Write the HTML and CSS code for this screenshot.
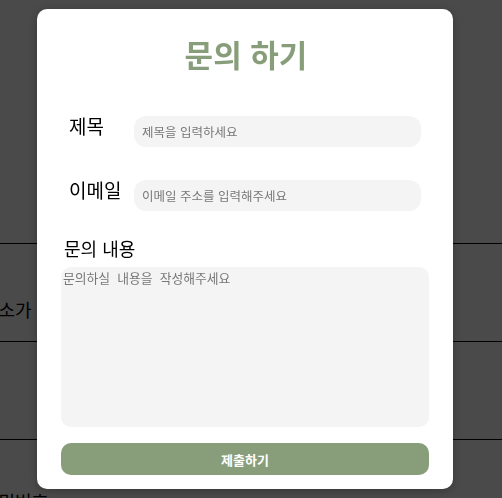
FILE: index.html
```html
<!DOCTYPE html>
<html lang="ko">
<head>
    <meta charset="UTF-8">
    <meta name="viewport" content="width=device-width, initial-scale=1.0">
    <title>문의 하기</title>
    <link rel="stylesheet" href="styles.css">
</head>
<body>

    <div class="list">
        <div class="row first"></div>
        <div class="row middle"><span class="cut">이소가</span></div>
        <div class="row"></div>
        <div class="row last"><span class="cut">비밀번호</span></div>
    </div>

    <div class="overlay">
        <div class="modal">
            <h1>문의 하기</h1>
            <form class="form">
                <div class="field">
                    <label for="title">제목</label>
                    <input id="title" type="text" placeholder="제목을 입력하세요">
                </div>
                <div class="field">
                    <label for="email">이메일</label>
                    <input id="email" type="email" placeholder="이메일 주소를 입력해주세요">
                </div>
                <label class="content-label" for="content">문의 내용</label>
                <textarea id="content" placeholder="문의하실  내용을  작성해주세요"></textarea>
                <button type="button" class="submit">제출하기</button>
            </form>
        </div>
    </div>

</body>
</html>
```
FILE: styles.css
```css
body {
    margin: 0;
    padding: 0;
    background-color: #4a4a4a;
    font-family: "Noto Sans CJK KR", "Noto Sans", sans-serif;
    overflow: hidden;
    height: 498px;
}
.list {
    display: flex;
    flex-direction: column;
    height: 498px;
    overflow: hidden;
}
.row {
    flex-shrink: 0;
    box-sizing: border-box;
    height: 98px;
    border-bottom: 1px solid #000;
    display: flex;
    align-items: center;
    font-size: 18px;
    color: #000;
    overflow: hidden;
}
.row.first {
    height: 244px;
}
.row.middle {
    padding-top: 32px;
}
.row.last {
    align-items: flex-start;
    padding-top: 48px;
    height: 58px;
    border-bottom: none;
}
.cut {
    margin-left: -18px;
    white-space: nowrap;
}
.overlay {
    position: fixed;
    inset: 0;
    display: flex;
    align-items: flex-start;
    padding: 9px 0 0 37px;
}
.modal {
    width: 416px;
    height: 480px;
    box-sizing: border-box;
    background-color: #fff;
    border-radius: 10px;
    box-shadow: 0 2px 8px rgba(0, 0, 0, 0.25);
    padding: 27px 24px 14px;
}
h1 {
    margin: 0;
    text-align: center;
    font-size: 31px;
    line-height: 36px;
    font-weight: 700;
    color: #889e7a;
    padding-left: 2px;
}
.form {
    display: flex;
    flex-direction: column;
    margin-top: 44px;
}
.field {
    display: flex;
    align-items: flex-start;
    padding-left: 8px;
    margin-bottom: 33px;
}
.field label {
    width: 65px;
    font-size: 19px;
    line-height: 20px;
    color: #000;
}
.field input {
    width: 287px;
    height: 31px;
    box-sizing: border-box;
    border: none;
    border-radius: 12px;
    background-color: #f4f4f4;
    padding: 0 8px;
    font-family: inherit;
    font-size: 12.5px;
    outline: none;
}
input::placeholder,
textarea::placeholder {
    color: #777;
}
.content-label {
    font-size: 18px;
    line-height: 22px;
    margin: -7px 0 8px 3px;
    color: #000;
}
textarea {
    height: 160px;
    box-sizing: border-box;
    border: none;
    border-radius: 10px;
    background-color: #f4f4f4;
    padding: 1px 2px;
    font-family: inherit;
    font-size: 12.8px;
    resize: none;
    outline: none;
}
.submit {
    margin-top: 16px;
    height: 32px;
    border: none;
    border-radius: 10px;
    background-color: #889e7a;
    color: #fff;
    font-family: inherit;
    font-size: 13px;
    font-weight: 700;
}
```
